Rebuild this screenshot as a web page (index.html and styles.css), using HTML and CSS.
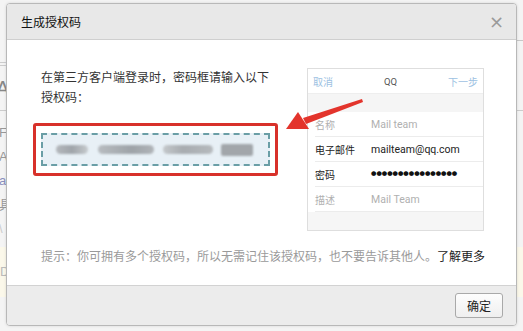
FILE: index.html
```html
<!DOCTYPE html>
<html lang="zh">
<head>
<meta charset="utf-8">
<link rel="stylesheet" href="styles.css">
</head>
<body>
<div class="page">
  <div class="pg-line pg-eq">=</div>
  <div class="pg-line pg-big">A</div>
  <div class="pg-rule"></div>
  <div class="pg-line">Fo</div>
  <div class="pg-line">A</div>
  <div class="pg-line pg-blue">al</div>
  <div class="pg-line">具</div>
  <div class="pg-line pg-light">\</div>
  <div class="pg-note">D</div>
  <div class="pg-right-rule"></div>
</div>

<div class="dialog">
  <div class="dlg-head">
    <span class="dlg-title">生成授权码</span>
    <span class="dlg-close">×</span>
  </div>
  <div class="dlg-body">
    <div class="main-row">
      <div class="left-col">
        <p class="intro">在第三方客户端登录时，密码框请输入以下<br>授权码：</p>
        <div class="code-frame">
          <div class="code-box">
            <span class="blob b1"></span>
            <span class="blob b2"></span>
            <span class="blob b3"></span>
            <span class="blob b4"></span>
          </div>
        </div>
      </div>
      <div class="phone">
        <div class="ph-head">
          <span class="ph-cancel">取消</span>
          <span class="ph-title">QQ</span>
          <span class="ph-next">下一步</span>
        </div>
        <div class="ph-gap"></div>
        <div class="ph-row"><span class="ph-label muted">名称</span><span class="ph-val muted">Mail team</span></div>
        <div class="ph-row"><span class="ph-label">电子邮件</span><span class="ph-val">mailteam@qq.com</span></div>
        <div class="ph-row"><span class="ph-label">密码</span><span class="ph-val dots">●●●●●●●●●●●●●●●●</span></div>
        <div class="ph-row"><span class="ph-label muted">描述</span><span class="ph-val muted">Mail Team</span></div>
        <div class="ph-foot"></div>
      </div>
    </div>
    <p class="hint">提示：你可拥有多个授权码，所以无需记住该授权码，也不要告诉其他人。<a class="more">了解更多</a></p>
  </div>
  <div class="dlg-foot">
    <button class="btn">确定</button>
  </div>
  <svg class="arrow" width="90" height="45" viewBox="0 0 90 45">
    <polygon points="86,5 87,8 30,30 27,24" fill="#e3342c"/>
    <polygon points="10,35 22,18 33,35" fill="#e3342c"/>
  </svg>
</div>
</body>
</html>
```

FILE: styles.css
```css
* { box-sizing: border-box; }
html, body { margin: 0; padding: 0; }
body {
  width: 523px;
  height: 331px;
  overflow: hidden;
  background: #f4f4f4;
  font-family: "Noto Sans CJK SC", "Noto Sans", sans-serif;
  position: relative;
}
.page {
  padding-top: 52px;
  color: #999;
  font-family: "Liberation Sans", "Noto Sans CJK SC", sans-serif;
  font-size: 13px;
}
.pg-line { height: 24px; line-height: 24px; margin-left: -1px; }
.pg-eq { color: #ccc; }
.pg-big { font-size: 20px; height: 30px; color: #888; margin-left: -4px; }
.pg-rule { height: 1px; background: #ccc; margin: 4px 0 10px; }
.pg-blue { color: #8a8fbf; }
.pg-light { color: #ccc; }
.pg-note { background: #fbf8ea; height: 50px; line-height: 50px; color: #bbb; margin-top: 6px; }
.pg-right-rule {
  position: absolute;
  right: 0;
  top: 40px;
  width: 8px;
  height: 1px;
  background: #c8c8c8;
}

.dialog {
  position: absolute;
  left: 6px;
  top: 3px;
  width: 511px;
  height: 323px;
  background: #fff;
  border: 1px solid #b8b8b8;
  border-radius: 4px;
  box-shadow: 0 0 3px rgba(0,0,0,0.12);
  display: flex;
  flex-direction: column;
  overflow: hidden;
}
.dlg-head {
  height: 36px;
  background: #e8e8e8;
  border-bottom: 1px solid #cfcfcf;
  display: flex;
  align-items: center;
  justify-content: space-between;
  padding: 0 12px 0 14px;
  flex-shrink: 0;
}
.dlg-title { font-size: 12px; color: #111; }
.dlg-close {
  font-family: "DejaVu Sans", sans-serif;
  font-size: 18px;
  color: #9a9a9a;
  line-height: 1;
}
.dlg-body { flex: 1; }
.main-row { display: flex; padding-top: 28px; }
.left-col { width: 272px; padding-left: 26px; }
.intro {
  margin: 0 0 0 8px;
  font-size: 12px;
  line-height: 20px;
  color: #333;
  position: relative;
  top: -1px;
}
.code-frame {
  margin-top: 15px;
  width: 245px;
  height: 53px;
  border: 3px solid #d8312a;
  border-radius: 3px;
  padding: 7px 5px;
}
.code-box {
  height: 33px;
  background: #e8f0f6;
  border: 2px dashed #6a9ea6;
  display: flex;
  align-items: center;
  padding-left: 13px;
}
.blob {
  display: block;
  height: 9px;
  border-radius: 5px;
  background: #a7abb0;
  filter: blur(1.2px);
}
.b1 { width: 32px; background: linear-gradient(90deg, #b4b8bc, #a0a5aa 50%, #c6cacd); }
.b2 { width: 56px; margin-left: 10px; background: linear-gradient(90deg, #b8bcc0, #9ea3a8 60%, #b0b4b8); }
.b3 { width: 50px; margin-left: 9px; background: linear-gradient(90deg, #c4c8cb, #a8acb0 40%, #b6babd); }
.b4 { width: 32px; margin-left: 8px; height: 12px; border-radius: 2px; background: #a2a6aa; }

.phone {
  margin-left: 28px;
  width: 177px;
  height: 163px;
  border: 1px solid #dedede;
  background: #fff;
  font-family: "Roboto", "Noto Sans CJK SC", sans-serif;
  font-size: 10px;
  display: flex;
  flex-direction: column;
}
.ph-head {
  height: 25px;
  display: flex;
  align-items: center;
  justify-content: space-between;
  padding: 0 5px;
  border-bottom: 1px solid #eee;
}
.ph-cancel, .ph-next { color: #9cc1e2; }
.ph-title { color: #555; font-size: 9.5px; }
.ph-gap { height: 18px; background: #f5f5f5; }
.ph-row {
  height: 25px;
  display: flex;
  align-items: center;
  margin-left: 7px;
  border-bottom: 1px solid #ececec;
}
.ph-row:last-of-type { border-bottom: none; }
.ph-label { width: 56px; color: #222; }
.ph-val { color: #222; font-size: 10.5px; }
.muted { color: #b0b0b0; }
.dots { font-size: 5.4px; letter-spacing: 0; color: #111; }
.ph-foot { flex: 1; background: #f6f6f6; }

.hint {
  margin: 15px 0 0 34px;
  font-size: 12px;
  line-height: 20px;
  color: #9a9a9a;
  white-space: nowrap;
}
.more { color: #222; }

.dlg-foot {
  height: 40px;
  flex-shrink: 0;
  background: #ececec;
  border-top: 1px solid #d2d2d2;
  display: flex;
  justify-content: flex-end;
  align-items: flex-start;
  padding: 7px 13px 0 0;
}
.btn {
  width: 48px;
  height: 25px;
  font-family: "Noto Sans CJK SC", sans-serif;
  font-size: 12px;
  color: #222;
  background: linear-gradient(#fdfdfd, #efefef);
  border: 1px solid #a9a9a9;
  border-radius: 3px;
  padding: 0;
}
.arrow {
  position: absolute;
  left: 269px;
  top: 90px;
}
```
